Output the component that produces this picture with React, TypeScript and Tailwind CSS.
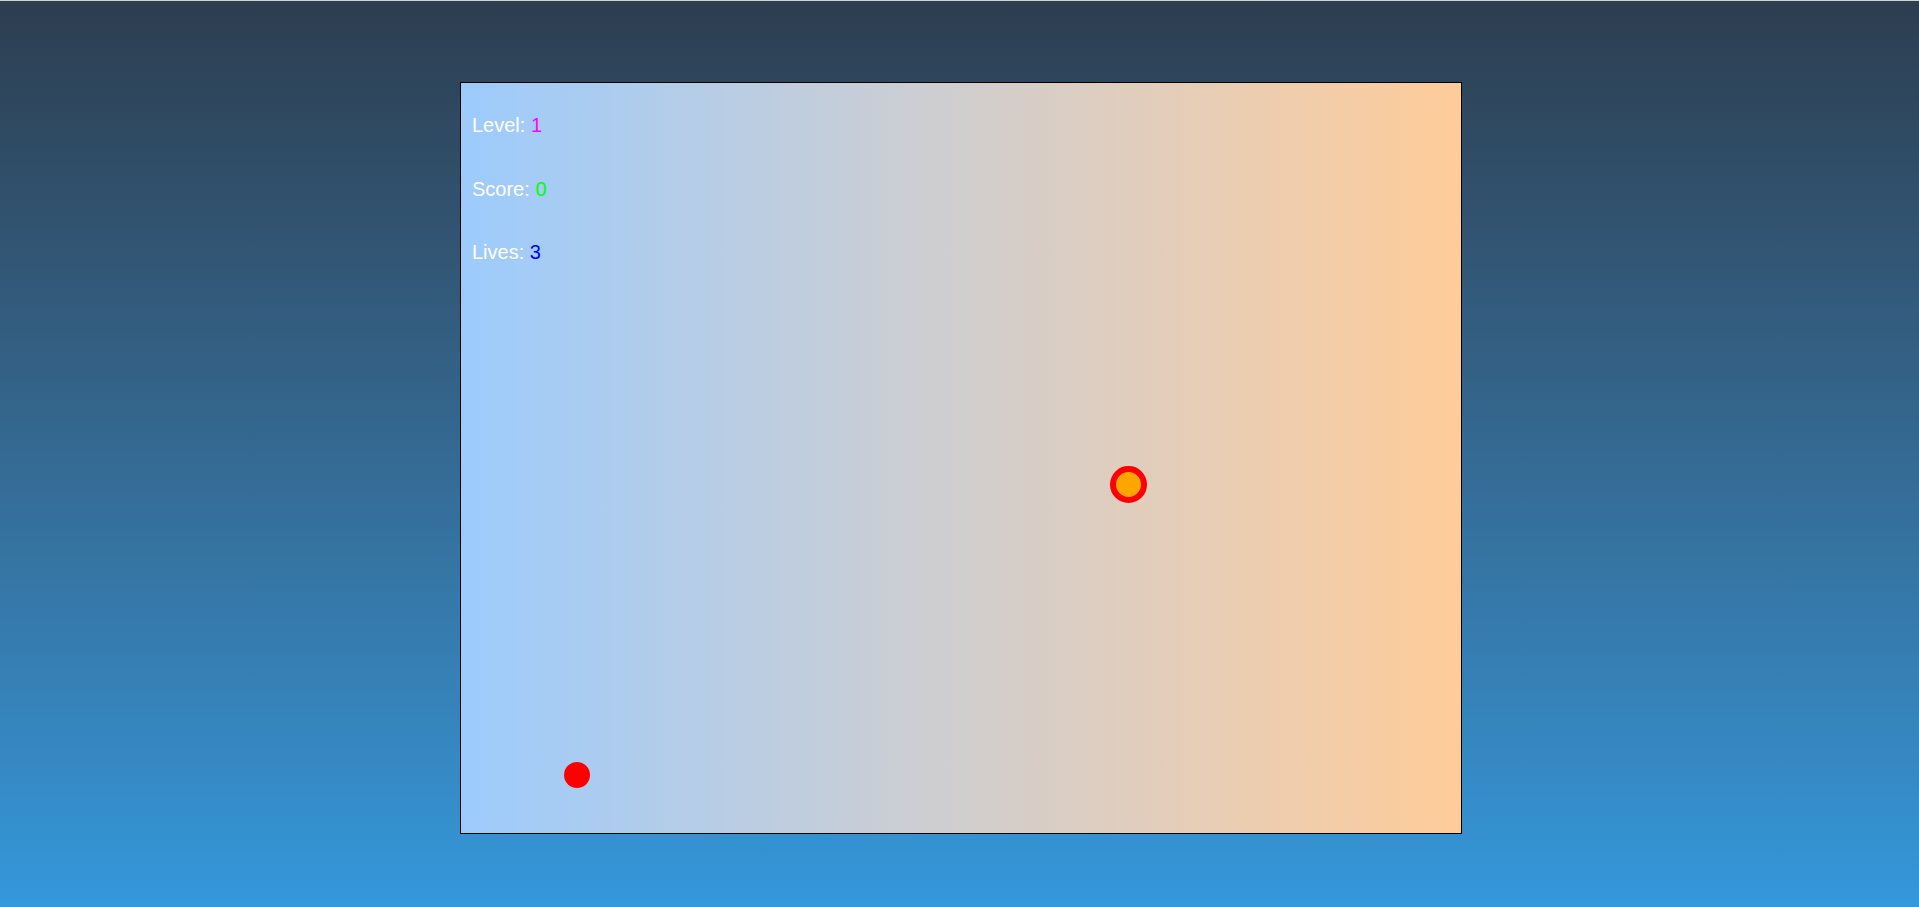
export default function App() {
  const stats = [
    { label: "Level", value: 1, color: "text-[#ff00ff]" },
    { label: "Score", value: 0, color: "text-[#00ff00]" },
    { label: "Lives", value: 3, color: "text-[#0000ff]" },
  ];

  return (
    <div className="min-h-[907px] w-full bg-gradient-to-b from-[#2c3e50] to-[#3498db] border-t border-[#d2d2d2] font-['Liberation_Sans',Arial,sans-serif]">
      <div className="pt-[81px] flex justify-center pl-[3px]">
        <div className="relative w-[1002px] h-[752px] border border-black bg-gradient-to-r from-[#9ccbfc] to-[#ffcc99]">
          {/* HUD */}
          <div className="flex flex-col gap-[40.5px] pt-[31px] pl-[11px] text-[20px] leading-[23px] text-white">
            {stats.map((s) => (
              <div key={s.label}>
                {s.label}: <span className={s.color}>{s.value}</span>
              </div>
            ))}
          </div>

          {/* player */}
          <div className="absolute left-[649px] top-[383px] w-[37px] h-[37px] rounded-full border-[6px] border-[#ff0000] bg-[#ffa500]" />

          {/* enemy */}
          <div className="absolute left-[103px] top-[679px] w-[26px] h-[26px] rounded-full bg-[#ff0000]" />
        </div>
      </div>
    </div>
  );
}
